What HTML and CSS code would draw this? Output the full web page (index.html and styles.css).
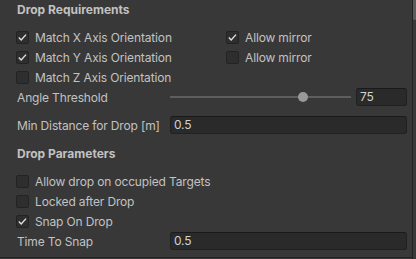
FILE: index.html
```html
<!DOCTYPE html>
<html lang="en">
<head>
    <meta charset="UTF-8">
    <title>Drop Settings</title>
    <link rel="stylesheet" href="styles.css">
</head>
<body>
    <div class="window">
        <div class="inspector">
            <div class="header">Drop Requirements</div>

            <div class="row first">
                <label class="toggle wide"><span class="box checked"><svg viewBox="0 0 11 11"><polyline points="1.8,5.5 4.2,8 9,2.6"/></svg></span>Match X Axis Orientation</label>
                <label class="toggle"><span class="box checked"><svg viewBox="0 0 11 11"><polyline points="1.8,5.5 4.2,8 9,2.6"/></svg></span>Allow mirror</label>
            </div>
            <div class="row">
                <label class="toggle wide"><span class="box checked"><svg viewBox="0 0 11 11"><polyline points="1.8,5.5 4.2,8 9,2.6"/></svg></span>Match Y Axis Orientation</label>
                <label class="toggle"><span class="box"></span>Allow mirror</label>
            </div>
            <div class="row">
                <label class="toggle wide"><span class="box"></span>Match Z Axis Orientation</label>
            </div>

            <div class="row">
                <div class="label">Angle Threshold</div>
                <div class="slider">
                    <div class="track">
                        <div class="thumb" style="left: 73.6%"></div>
                    </div>
                    <div class="field small">75</div>
                </div>
            </div>

            <div class="row spaced">
                <div class="label">Min Distance for Drop [m]</div>
                <div class="field">0.5</div>
            </div>

            <div class="header second">Drop Parameters</div>

            <div class="row first">
                <label class="toggle"><span class="box"></span>Allow drop on occupied Targets</label>
            </div>
            <div class="row">
                <label class="toggle"><span class="box"></span>Locked after Drop</label>
            </div>
            <div class="row">
                <label class="toggle"><span class="box checked"><svg viewBox="0 0 11 11"><polyline points="1.8,5.5 4.2,8 9,2.6"/></svg></span>Snap On Drop</label>
            </div>
            <div class="row">
                <div class="label">Time To Snap</div>
                <div class="field">0.5</div>
            </div>
        </div>
        <div class="scrollbar">
            <div class="scroll-thumb"></div>
        </div>
    </div>
</body>
</html>
```

FILE: styles.css
```css
body {
    margin: 0;
    background: #383838;
    font-family: 'Inter', 'Noto Sans', sans-serif;
    font-size: 12px;
    color: #c2c2c2;
}

.window {
    display: flex;
    height: 259px;
}

.inspector {
    flex: 1;
    height: 257px;
    padding: 0 5px 0 16px;
    border-bottom: 1px solid #232323;
}

.header {
    height: 20px;
    line-height: 20px;
    padding-left: 1px;
    font-weight: bold;
}

.header.second {
    margin-top: 9px;
}

.row {
    display: flex;
    align-items: center;
    height: 20px;
    letter-spacing: -0.15px;
}

.row.first {
    margin-top: 7px;
}

.row.spaced {
    margin-top: 8px;
}

.toggle {
    display: flex;
    align-items: center;
    gap: 6px;
    white-space: nowrap;
}

.toggle.wide {
    width: 210px;
}

.box {
    width: 11px;
    height: 11px;
    border: 1px solid #232323;
    border-radius: 2px;
    background: #2e2e2e;
    display: flex;
}

.box svg {
    width: 11px;
    height: 11px;
    fill: none;
    stroke: #e0e0e0;
    stroke-width: 1.4;
}

.label {
    width: 153px;
    padding-left: 1px;
    white-space: nowrap;
}

.field {
    flex: 1;
    height: 16px;
    line-height: 16px;
    padding-left: 3px;
    background: #2a2a2a;
    border: 1px solid #212121;
    border-top-color: #1a1a1a;
    border-radius: 3px;
    color: #d2d2d2;
}

.field.small {
    flex: none;
    width: 46px;
    margin-left: 5px;
}

.slider {
    flex: 1;
    display: flex;
    align-items: center;
}

.track {
    flex: 1;
    height: 2px;
    background: #5e5e5e;
    position: relative;
}

.thumb {
    position: absolute;
    top: -4px;
    width: 10px;
    height: 10px;
    margin-left: -5px;
    border-radius: 50%;
    background: #999999;
}

.scrollbar {
    width: 3px;
    border-left: 1px solid #232323;
    background: #393939;
}

.scroll-thumb {
    height: 20px;
    background: #5c5c5c;
    border-radius: 0 0 2px 2px;
}
```
